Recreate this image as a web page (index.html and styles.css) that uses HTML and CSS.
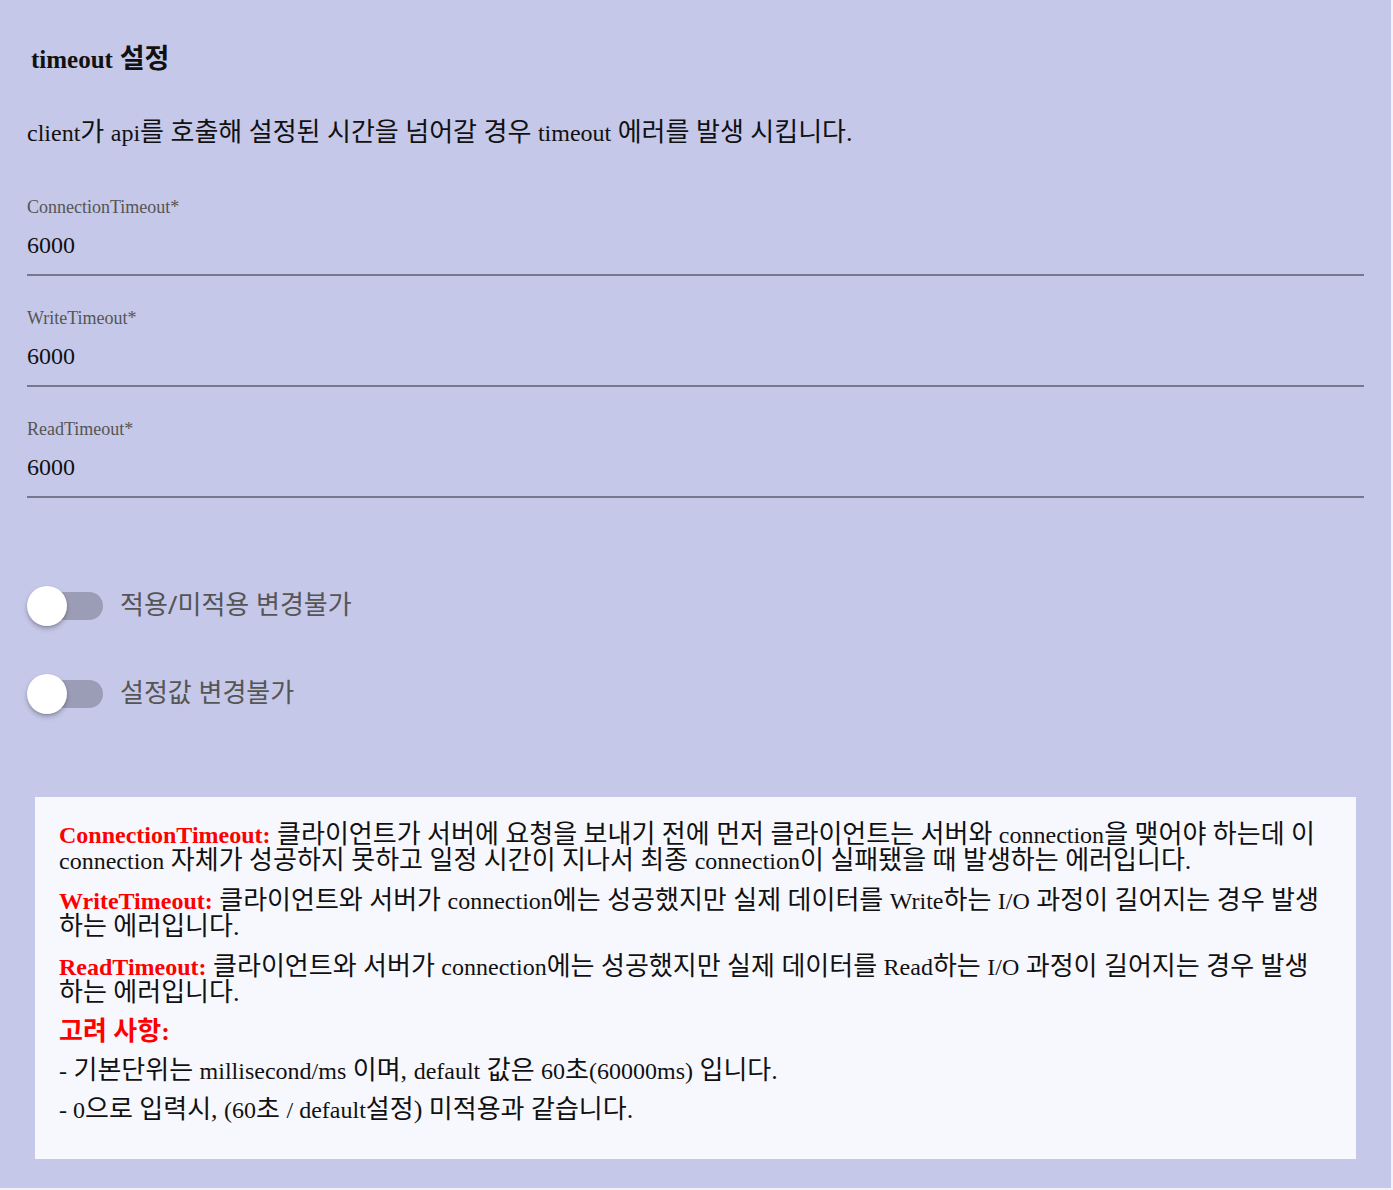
FILE: index.html
```html
<!DOCTYPE html>
<html lang="ko">
<head>
  <meta charset="UTF-8">
  <meta name="viewport" content="width=device-width, initial-scale=1.0">
  <title>timeout 설정</title>
  <link rel="stylesheet" href="styles.css">
</head>
<body>
  <div class="page">
    <h2 class="title"><span class="en">timeout</span> 설정</h2>
    <p class="desc"><span class="en">client</span>가 <span class="en">api</span>를 호출해 설정된 시간을 넘어갈 경우 <span class="en">timeout</span> 에러를 발생 시킵니다.</p>

    <div class="field">
      <label for="conn">ConnectionTimeout*</label>
      <input id="conn" type="text" value="6000">
    </div>
    <div class="field">
      <label for="write">WriteTimeout*</label>
      <input id="write" type="text" value="6000">
    </div>
    <div class="field">
      <label for="read">ReadTimeout*</label>
      <input id="read" type="text" value="6000">
    </div>

    <div class="switches">
      <label class="switch">
        <span class="track"><span class="thumb"></span></span>
        <span class="switch-label">적용/미적용 변경불가</span>
      </label>
      <label class="switch">
        <span class="track"><span class="thumb"></span></span>
        <span class="switch-label">설정값 변경불가</span>
      </label>
    </div>

    <div class="notice">
      <p><strong class="key">ConnectionTimeout:</strong> 클라이언트가 서버에 요청을 보내기 전에 먼저 클라이언트는 서버와 <span class="en">connection</span>을 맺어야 하는데 이 <span class="en">connection</span> 자체가 성공하지 못하고 일정 시간이 지나서 최종 <span class="en">connection</span>이 실패됐을 때 발생하는 에러입니다.</p>
      <p><strong class="key">WriteTimeout:</strong> 클라이언트와 서버가 <span class="en">connection</span>에는 성공했지만 실제 데이터를 <span class="en">Write</span>하는 <span class="en">I/O</span> 과정이 길어지는 경우 발생하는 에러입니다.</p>
      <p><strong class="key">ReadTimeout:</strong> 클라이언트와 서버가 <span class="en">connection</span>에는 성공했지만 실제 데이터를 <span class="en">Read</span>하는 <span class="en">I/O</span> 과정이 길어지는 경우 발생하는 에러입니다.</p>
      <div class="note-title">고려 사항:</div>
      <div class="note"><span class="en">-</span> 기본단위는 <span class="en">millisecond/ms</span> 이며, <span class="en">default</span> 값은 <span class="en">60</span>초<span class="en">(60000ms)</span> 입니다.</div>
      <div class="note"><span class="en">- 0</span>으로 입력시, <span class="en">(60</span>초 <span class="en">/ default</span>설정) 미적용과 같습니다.</div>
    </div>
  </div>
</body>
</html>
```

FILE: styles.css
```css
body {
  margin: 0;
  background: #f3f3f7;
  font-family: 'Liberation Serif', 'Noto Sans CJK KR', serif;
  color: #111;
}

.en {
  font-size: 24px;
}

.page {
  width: 1391px;
  height: 1188px;
  box-sizing: border-box;
  background: #c5c8e8;
  padding: 44px 27px 0;
}

.title {
  margin: 0;
  padding-left: 4px;
  font-size: 27px;
  line-height: 30px;
  font-weight: bold;
}

.title .en {
  font-size: 25px;
}

.desc {
  margin: 43px 0 0;
  font-size: 26px;
  line-height: 30px;
}

.field {
  display: flex;
  flex-direction: column;
  margin-top: 32px;
}

.desc + .field {
  margin-top: 49px;
}

.field label {
  font-size: 18px;
  line-height: 20px;
  color: #555;
}

.field input {
  margin-top: 13px;
  padding: 0 0 14px;
  border: none;
  border-bottom: 2px solid #76788b;
  background: transparent;
  font-family: 'Liberation Serif', serif;
  font-size: 24px;
  line-height: 30px;
  height: 30px;
  box-sizing: content-box;
  color: #111;
  outline: none;
}

.switches {
  display: flex;
  flex-direction: column;
  gap: 48px;
  margin-top: 88px;
}

.switch {
  display: flex;
  align-items: center;
  height: 40px;
}

.track {
  position: relative;
  width: 70px;
  height: 28px;
  margin-left: 6px;
  border-radius: 14px;
  background: #9b9db6;
}

.thumb {
  position: absolute;
  left: -6px;
  top: -6px;
  width: 40px;
  height: 40px;
  border-radius: 50%;
  background: #fff;
  box-shadow: 0 3px 5px rgba(0, 0, 0, 0.22), 0 1px 2px rgba(0, 0, 0, 0.15);
}

.switch-label {
  margin: 0 0 4px 17px;
  font-family: 'Noto Sans', 'Noto Sans CJK KR', sans-serif;
  font-size: 26px;
  line-height: 30px;
  color: #555;
}

.notice {
  margin: 83px 8px 0;
  padding: 25px 24px 36px;
  background: #f7f8fe;
  font-size: 26px;
  line-height: 26px;
}

.notice p {
  margin: 0 0 14px;
}

.key {
  color: #f00;
  font-size: 24px;
}

.note-title {
  margin-top: -1px;
  color: #f00;
  font-weight: bold;
}

.note {
  margin-top: 13px;
}
```
